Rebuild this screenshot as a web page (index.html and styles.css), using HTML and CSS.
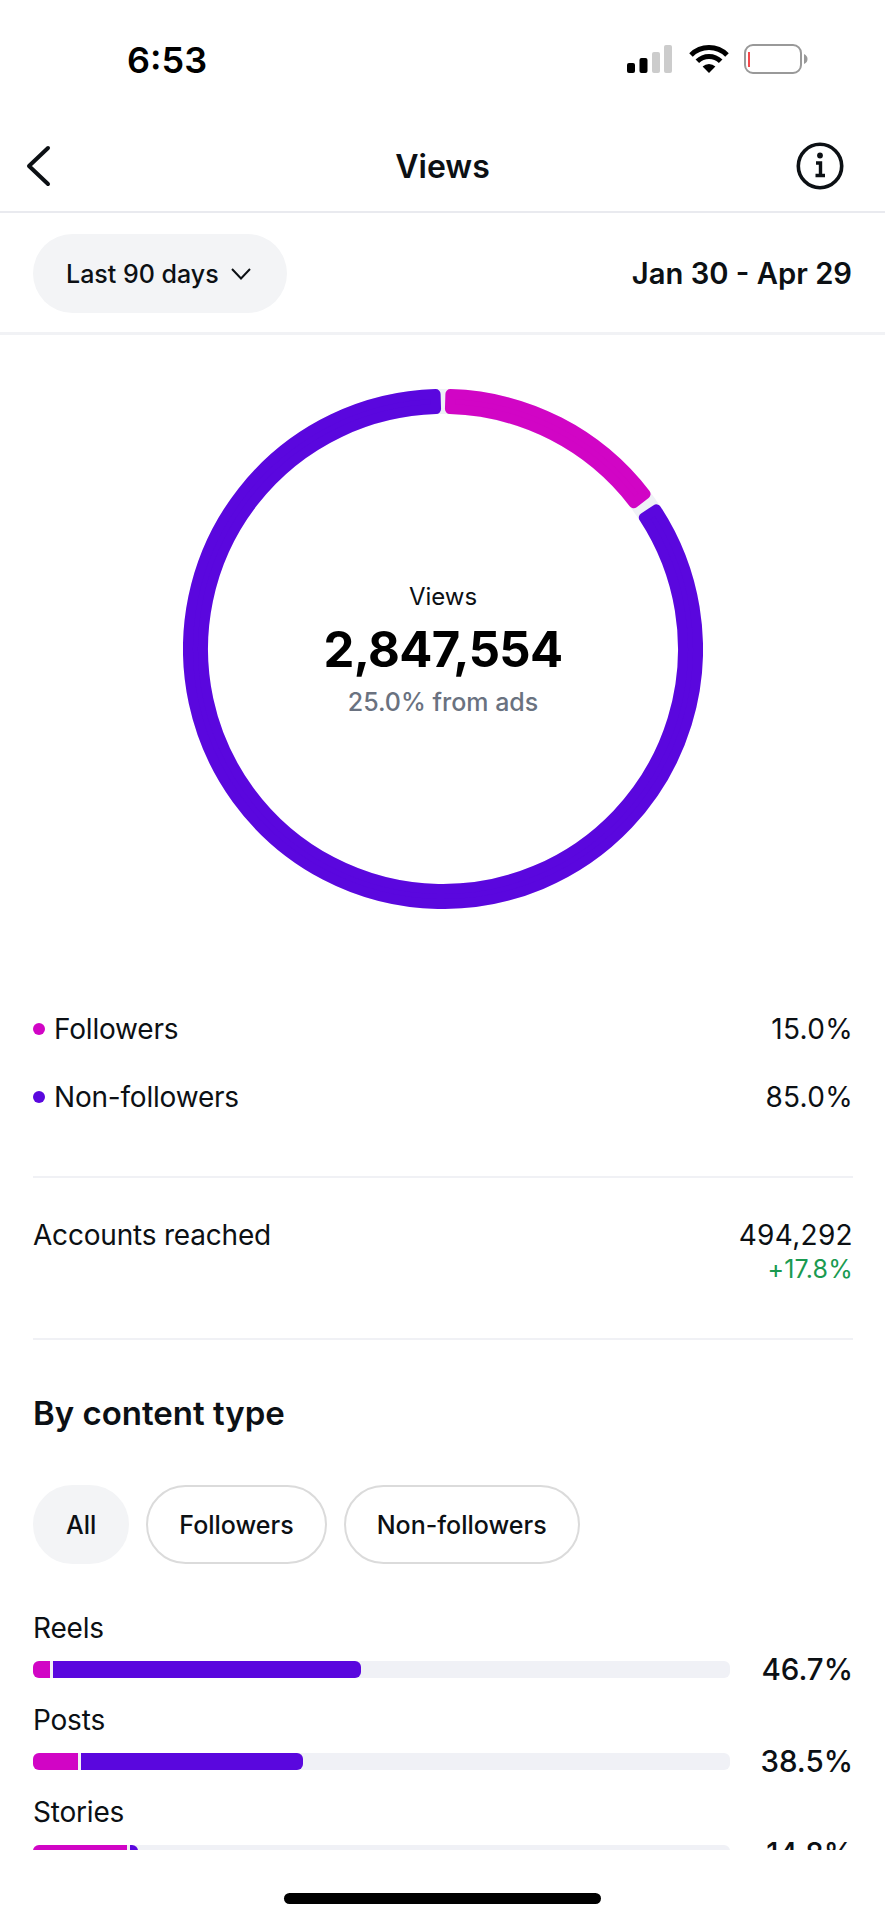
FILE: index.html
```html
<!doctype html>
<html>

<head>
    <meta charset="utf-8">
    <title>Views</title>
    <link rel="stylesheet" href="styles.css">
</head>

<body>
    <div class="app">
        <div class="status-bar">
            <span class="clock">6:53</span>
            <div class="status-icons">
                <svg class="signal" width="45" height="28" viewBox="0 0 45 28">
                    <rect x="0" y="18" width="8" height="10" rx="2" fill="#000" />
                    <rect x="12.5" y="13" width="8" height="15" rx="2" fill="#000" />
                    <rect x="25" y="7" width="8" height="21" rx="2" fill="#ccc" />
                    <rect x="37" y="0" width="8" height="28" rx="2" fill="#ccc" />
                </svg>
                <svg class="wifi" width="40" height="28" viewBox="0 0 40 28">
                    <path d="M2 10A25.5 25.5 0 0 1 38 10" fill="none" stroke="#000" stroke-width="5" />
                    <path d="M8.33 16.33A16.5 16.5 0 0 1 31.67 16.33" fill="none" stroke="#000" stroke-width="5" />
                    <path d="M20 28L13.6 21.6A9 9 0 0 1 26.4 21.6Z" fill="#000" />
                </svg>
                <svg class="battery" width="64" height="30" viewBox="0 0 64 30">
                    <rect x="1" y="1" width="56" height="28" rx="8" fill="none" stroke="#999" stroke-width="2" />
                    <rect x="4" y="8" width="2" height="15" fill="#f4484c" />
                    <path d="M60 10C62.5 11 63.5 13 63.5 15C63.5 17 62.5 19 60 20Z" fill="#999" />
                </svg>
            </div>
        </div>

        <div class="nav-bar">
            <svg class="back" width="28" height="42" viewBox="0 0 28 42">
                <path d="M23 3L4 21L23 39" fill="none" stroke="#0c1014" stroke-width="4" stroke-linecap="round" stroke-linejoin="round" />
            </svg>
            <span class="nav-title">Views</span>
            <svg class="info" width="48" height="48" viewBox="0 0 48 48">
                <circle cx="24" cy="24" r="21.7" fill="none" stroke="#0c1014" stroke-width="3.6" />
                <circle cx="24" cy="13.5" r="2.9" fill="#0c1014" />
                <path d="M20 21H24.5V33M19.5 33.5H29" fill="none" stroke="#0c1014" stroke-width="3.4" />
            </svg>
        </div>

        <div class="controls">
            <div class="pill range-pill">
                Last 90 days
                <svg width="20" height="12" viewBox="0 0 20 12">
                    <path d="M1 1L10 10.5L19 1" fill="none" stroke="#0c1014" stroke-width="2" />
                </svg>
            </div>
            <span class="date-range">Jan 30 - Apr 29</span>
        </div>

        <div class="content">
            <div class="donut">
                <svg width="520" height="520" viewBox="-260 -260 520 520">
                    <circle r="247.5" fill="none" stroke="#eff1f6" stroke-width="25" />
                    <path class="seg-pink" d="M7.39 -254.89A255 255 0 0 1 202.57 -154.88L190.66 -145.77A240 240 0 0 0 6.95 -239.9Z" />
                    <path class="seg-purple" d="M213.37 -139.63A255 255 0 1 1 -7.39 -254.89L-6.95 -239.9A240 240 0 1 0 200.82 -131.41Z" />
                </svg>
                <div class="donut-label">
                    <div class="donut-caption">Views</div>
                    <div class="donut-total">2,847,554</div>
                    <div class="donut-sub">25.0% from ads</div>
                </div>
            </div>

            <div class="legend">
                <div class="row">
                    <span class="legend-name"><i class="dot pink"></i>Followers</span>
                    <span class="value">15.0%</span>
                </div>
                <div class="row">
                    <span class="legend-name"><i class="dot purple"></i>Non-followers</span>
                    <span class="value">85.0%</span>
                </div>
            </div>

            <div class="reach">
                <div class="row">
                    <span>Accounts reached</span>
                    <div class="reach-value">
                        <div class="value">494,292</div>
                        <div class="delta">+17.8%</div>
                    </div>
                </div>
            </div>

            <h2 class="section-title">By content type</h2>

            <div class="chips">
                <span class="pill chip active">All</span>
                <span class="pill chip">Followers</span>
                <span class="pill chip">Non-followers</span>
            </div>

            <div class="type-list">
                <div class="type-row">
                    <div class="type-name">Reels</div>
                    <div class="type-line">
                        <div class="bar">
                            <div class="bar-pink" style="width: 17px"></div>
                            <div class="bar-purple" style="width: 308px"></div>
                        </div>
                        <span class="type-pct">46.7%</span>
                    </div>
                </div>
                <div class="type-row">
                    <div class="type-name">Posts</div>
                    <div class="type-line">
                        <div class="bar">
                            <div class="bar-pink" style="width: 45px"></div>
                            <div class="bar-purple" style="width: 222px"></div>
                        </div>
                        <span class="type-pct">38.5%</span>
                    </div>
                </div>
                <div class="type-row">
                    <div class="type-name">Stories</div>
                    <div class="type-line">
                        <div class="bar">
                            <div class="bar-pink" style="width: 94px"></div>
                            <div class="bar-purple" style="width: 8px"></div>
                        </div>
                        <span class="type-pct">14.8%</span>
                    </div>
                </div>
            </div>
        </div>

        <div class="home-area">
            <div class="home-bar"></div>
        </div>
    </div>
</body>

</html>
```

FILE: styles.css
```css
html,
body {
    margin: 0;
    background: #fff;
}

body {
    font-family: Inter, "Liberation Sans", sans-serif;
    color: #0c1014;
}

.app {
    width: 885px;
    height: 1920px;
    display: flex;
    flex-direction: column;
    overflow: hidden;
}

/* status bar */
.status-bar {
    height: 112px;
    flex: none;
    display: flex;
    justify-content: space-between;
    box-sizing: border-box;
    padding: 44px 77px 0 127px;
}

.clock {
    font-size: 36px;
    line-height: 32px;
    font-weight: 600;
    color: #000;
}

.status-icons {
    display: flex;
    align-items: flex-start;
    height: 30px;
}

.signal {
    margin-top: 1px;
    margin-right: 17px;
}

.wifi {
    margin-top: 1px;
    margin-right: 15px;
}

/* nav */
.nav-bar {
    height: 101px;
    flex: none;
    box-sizing: border-box;
    border-bottom: 2px solid #e9eaef;
    display: grid;
    grid-template-columns: 1fr auto 1fr;
    align-items: center;
    padding: 9px 25px 0;
}

.info {
    justify-self: end;
    margin-right: 16px;
}

.nav-title {
    font-size: 32px;
    font-weight: 600;
}

.controls {
    height: 122px;
    flex: none;
    box-sizing: border-box;
    border-bottom: 3px solid #f1f2f5;
    display: flex;
    align-items: center;
    justify-content: space-between;
    padding: 2px 33px 0;
}

.pill {
    display: flex;
    align-items: center;
    box-sizing: border-box;
    border-radius: 40px;
    font-size: 25px;
    font-weight: 500;
}

.range-pill {
    width: 254px;
    height: 79px;
    padding-left: 33px;
    gap: 12px;
    background: #f3f4f6;
}

.date-range {
    font-size: 29.2px;
    font-weight: 600;
}

/* donut */
.content {
    flex: 1;
    min-height: 0;
    overflow: hidden;
    padding: 54px 32px 0 33px;
}

.donut {
    display: grid;
    justify-content: center;
    align-items: center;
    justify-items: center;
}

.donut svg,
.donut-label {
    grid-area: 1 / 1;
}

.donut svg {
    display: block;
}

.seg-pink {
    fill: #d105c5;
    stroke: #d105c5;
    stroke-width: 10;
    stroke-linejoin: round;
}

.seg-purple {
    fill: #5a07de;
    stroke: #5a07de;
    stroke-width: 10;
    stroke-linejoin: round;
}

.donut-label {
    text-align: center;
}

.donut-caption {
    font-size: 24px;
    line-height: 30px;
}

.donut-total {
    font-size: 49px;
    line-height: 60px;
    font-weight: 700;
    letter-spacing: -0.7px;
    color: #000;
    margin-top: 8px;
}

.donut-sub {
    font-size: 25px;
    line-height: 30px;
    font-weight: 500;
    color: #6a7280;
    margin-top: 7px;
}

/* legend and reach rows */
.row {
    display: flex;
    justify-content: space-between;
    font-size: 28px;
    line-height: 34px;
    letter-spacing: -0.2px;
}

.value {
    letter-spacing: 0.3px;
}

.legend {
    margin-top: 103px;
    padding-bottom: 62px;
    border-bottom: 2px solid #f0f1f5;
    display: flex;
    flex-direction: column;
    gap: 34px;
}

.legend-name {
    display: flex;
    align-items: center;
}

.dot {
    width: 12px;
    height: 12px;
    border-radius: 50%;
    margin-right: 9px;
}

.pink {
    background: #d105c5;
}

.purple {
    background: #5a07de;
}

.reach {
    padding: 40px 0 54px;
    border-bottom: 2px solid #f0f1f5;
}

.reach-value {
    text-align: right;
}

.delta {
    font-size: 25px;
    line-height: 30px;
    letter-spacing: 0.2px;
    margin-top: 2px;
    color: #1a9a50;
}

.section-title {
    margin: 55px 0 0;
    font-size: 33px;
    line-height: 36px;
    font-weight: 600;
}

.chips {
    display: flex;
    gap: 17px;
    margin-top: 54px;
}

.chip {
    height: 79px;
    padding: 0 31px;
    border: 2px solid #dbdbdb;
}

.chip.active {
    background: #f3f4f6;
    border-color: #f3f4f6;
}

/* content type rows */
.type-list {
    margin-top: 48px;
    display: flex;
    flex-direction: column;
    gap: 17px;
}

.type-name {
    font-size: 28px;
    line-height: 32px;
    letter-spacing: -0.2px;
}

.type-line {
    display: flex;
    align-items: center;
    justify-content: space-between;
    height: 36px;
    margin-top: 7px;
}

.bar {
    width: 697px;
    height: 17px;
    border-radius: 6px;
    background: #f0f1f6;
    display: flex;
    gap: 3px;
    overflow: hidden;
}

.bar-pink {
    background: #d105c5;
}

.bar-purple {
    background: #5a07de;
    border-radius: 0 6px 6px 0;
}

.type-pct {
    font-size: 29.5px;
    font-weight: 550;
}

.home-area {
    height: 70px;
    flex: none;
    box-sizing: border-box;
    padding-top: 43px;
    display: flex;
    justify-content: center;
}

.home-bar {
    width: 317px;
    height: 11px;
    border-radius: 6px;
    background: #000;
}
```
